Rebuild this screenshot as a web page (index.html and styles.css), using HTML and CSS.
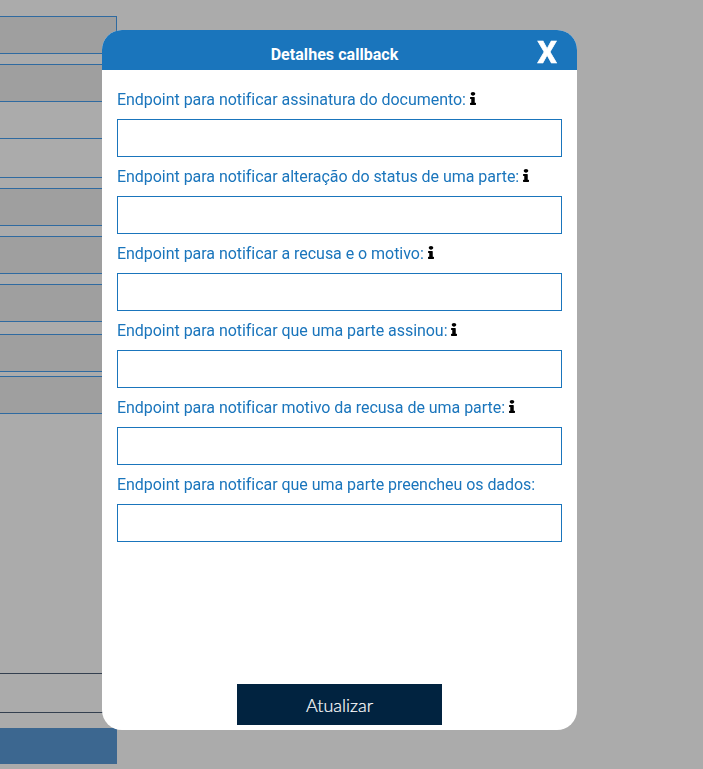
FILE: index.html
```html
<!DOCTYPE html>
<html lang="pt-BR">
  <head>
    <meta charset="UTF-8" />
    <meta name="viewport" content="width=device-width, initial-scale=1.0" />
    <title>Detalhes callback</title>
    <link rel="stylesheet" href="styles.css">
  </head>
  <body>
    <div class="table">
      <div class="row shaded"></div>
      <div class="row shaded gap-10"></div>
      <div class="row plain"></div>
      <div class="row plain tall"></div>
      <div class="row shaded gap-10"></div>
      <div class="row shaded gap-10"></div>
      <div class="row shaded gap-10"></div>
      <div class="row shaded gap-12"></div>
      <div class="row shaded gap-4"></div>
      <div class="row footer-row"></div>
      <div class="table-btn"></div>
    </div>

    <div class="overlay">
      <div class="modal">
        <div class="modal-header">
          <span class="modal-title">Detalhes callback</span>
          <span class="modal-close">X</span>
        </div>
        <div class="modal-body">
          <div class="field">
            <label>Endpoint para notificar assinatura do documento:
              <svg class="info" viewBox="0 0 192 512" preserveAspectRatio="none"><path d="M20 424.229h20V279.771H20c-11.046 0-20-8.954-20-20V212c0-11.046 8.954-20 20-20h112c11.046 0 20 8.954 20 20v212.229h20c11.046 0 20 8.954 20 20V492c0 11.046-8.954 20-20 20H20c-11.046 0-20-8.954-20-20v-47.771c0-11.046 8.954-20 20-20zM96 0C56.235 0 24 32.235 24 72s32.235 72 72 72 72-32.235 72-72S135.764 0 96 0z"/></svg>
            </label>
            <input type="text" />
          </div>
          <div class="field">
            <label>Endpoint para notificar alteração do status de uma parte:
              <svg class="info" viewBox="0 0 192 512" preserveAspectRatio="none"><path d="M20 424.229h20V279.771H20c-11.046 0-20-8.954-20-20V212c0-11.046 8.954-20 20-20h112c11.046 0 20 8.954 20 20v212.229h20c11.046 0 20 8.954 20 20V492c0 11.046-8.954 20-20 20H20c-11.046 0-20-8.954-20-20v-47.771c0-11.046 8.954-20 20-20zM96 0C56.235 0 24 32.235 24 72s32.235 72 72 72 72-32.235 72-72S135.764 0 96 0z"/></svg>
            </label>
            <input type="text" />
          </div>
          <div class="field">
            <label>Endpoint para notificar a recusa e o motivo:
              <svg class="info" viewBox="0 0 192 512" preserveAspectRatio="none"><path d="M20 424.229h20V279.771H20c-11.046 0-20-8.954-20-20V212c0-11.046 8.954-20 20-20h112c11.046 0 20 8.954 20 20v212.229h20c11.046 0 20 8.954 20 20V492c0 11.046-8.954 20-20 20H20c-11.046 0-20-8.954-20-20v-47.771c0-11.046 8.954-20 20-20zM96 0C56.235 0 24 32.235 24 72s32.235 72 72 72 72-32.235 72-72S135.764 0 96 0z"/></svg>
            </label>
            <input type="text" />
          </div>
          <div class="field">
            <label>Endpoint para notificar que uma parte assinou:
              <svg class="info" viewBox="0 0 192 512" preserveAspectRatio="none"><path d="M20 424.229h20V279.771H20c-11.046 0-20-8.954-20-20V212c0-11.046 8.954-20 20-20h112c11.046 0 20 8.954 20 20v212.229h20c11.046 0 20 8.954 20 20V492c0 11.046-8.954 20-20 20H20c-11.046 0-20-8.954-20-20v-47.771c0-11.046 8.954-20 20-20zM96 0C56.235 0 24 32.235 24 72s32.235 72 72 72 72-32.235 72-72S135.764 0 96 0z"/></svg>
            </label>
            <input type="text" />
          </div>
          <div class="field">
            <label>Endpoint para notificar motivo da recusa de uma parte:
              <svg class="info" viewBox="0 0 192 512" preserveAspectRatio="none"><path d="M20 424.229h20V279.771H20c-11.046 0-20-8.954-20-20V212c0-11.046 8.954-20 20-20h112c11.046 0 20 8.954 20 20v212.229h20c11.046 0 20 8.954 20 20V492c0 11.046-8.954 20-20 20H20c-11.046 0-20-8.954-20-20v-47.771c0-11.046 8.954-20 20-20zM96 0C56.235 0 24 32.235 24 72s32.235 72 72 72 72-32.235 72-72S135.764 0 96 0z"/></svg>
            </label>
            <input type="text" />
          </div>
          <div class="field">
            <label>Endpoint para notificar que uma parte preencheu os dados:</label>
            <input type="text" />
          </div>
          <button class="btn-update" type="button">Atualizar</button>
        </div>
      </div>
    </div>
  </body>
</html>
```

FILE: styles.css
```css
* {
  margin: 0;
  padding: 0;
  box-sizing: border-box;
}
html,
body {
  height: 100%;
  overflow: hidden;
  background: #fff;
  font-family: Roboto, "Liberation Sans", sans-serif;
}
.table {
  display: flex;
  flex-direction: column;
  width: 117px;
  padding-top: 16px;
}
.row {
  height: 38px;
  border: 1px solid #469fef;
  border-left: 0;
}
.row.shaded {
  background: #eee;
}
.row.plain {
  margin-top: -1px;
  border-top: 0;
  height: 38px;
}
.row.plain.tall {
  height: 40px;
}
.gap-4 {
  margin-top: 4px;
}
.gap-10 {
  margin-top: 10px;
}
.gap-12 {
  margin-top: 12px;
}
.row.footer-row {
  height: 40px;
  margin-top: 259px;
  border-color: #4c5e77;
  border-right: 0;
}
.table-btn {
  height: 36px;
  margin-top: 15px;
  background: #5a9ad7;
}
.overlay {
  position: fixed;
  top: 0;
  left: 0;
  width: 100%;
  height: 100%;
  background: rgba(0, 0, 0, 0.33);
}
.modal {
  display: flex;
  flex-direction: column;
  width: 475px;
  height: 700px;
  margin: 30px 0 0 102px;
  border-radius: 20px;
  background: #fff;
  overflow: hidden;
}
.modal-header {
  position: relative;
  display: flex;
  justify-content: center;
  align-items: center;
  flex: none;
  height: 40px;
  padding: 9px 10px 0 0;
  background: #1a75bc;
  color: #fff;
}
.modal-title {
  font-size: 16px;
  font-weight: 700;
  letter-spacing: 0.05px;
}
.modal-close {
  position: absolute;
  top: 5px;
  right: 20px;
  font-size: 31px;
  font-weight: 700;
  line-height: 36px;
  -webkit-text-stroke: 0.6px #fff;
}
.modal-body {
  display: flex;
  flex-direction: column;
  flex: 1;
  padding: 20px 15px 5px;
}
.field {
  display: flex;
  flex-direction: column;
}
.field label {
  height: 29px;
  color: #1a75bc;
  font-size: 16px;
  line-height: 19px;
  letter-spacing: -0.04px;
}
.field input {
  width: 100%;
  height: 38px;
  margin-bottom: 10px;
  border: 1px solid #1a75bc;
  background: #fff;
  outline: none;
}
.info {
  display: inline-block;
  width: 6px;
  height: 13px;
  vertical-align: 0;
}
.btn-update {
  width: 205px;
  height: 41px;
  margin: auto auto 0;
  border: 0;
  background: #012340;
  color: #fff;
  font-family: Lato, sans-serif;
  font-size: 18px;
  font-weight: 300;
  -webkit-text-stroke: 0.2px #fff;
}
```
